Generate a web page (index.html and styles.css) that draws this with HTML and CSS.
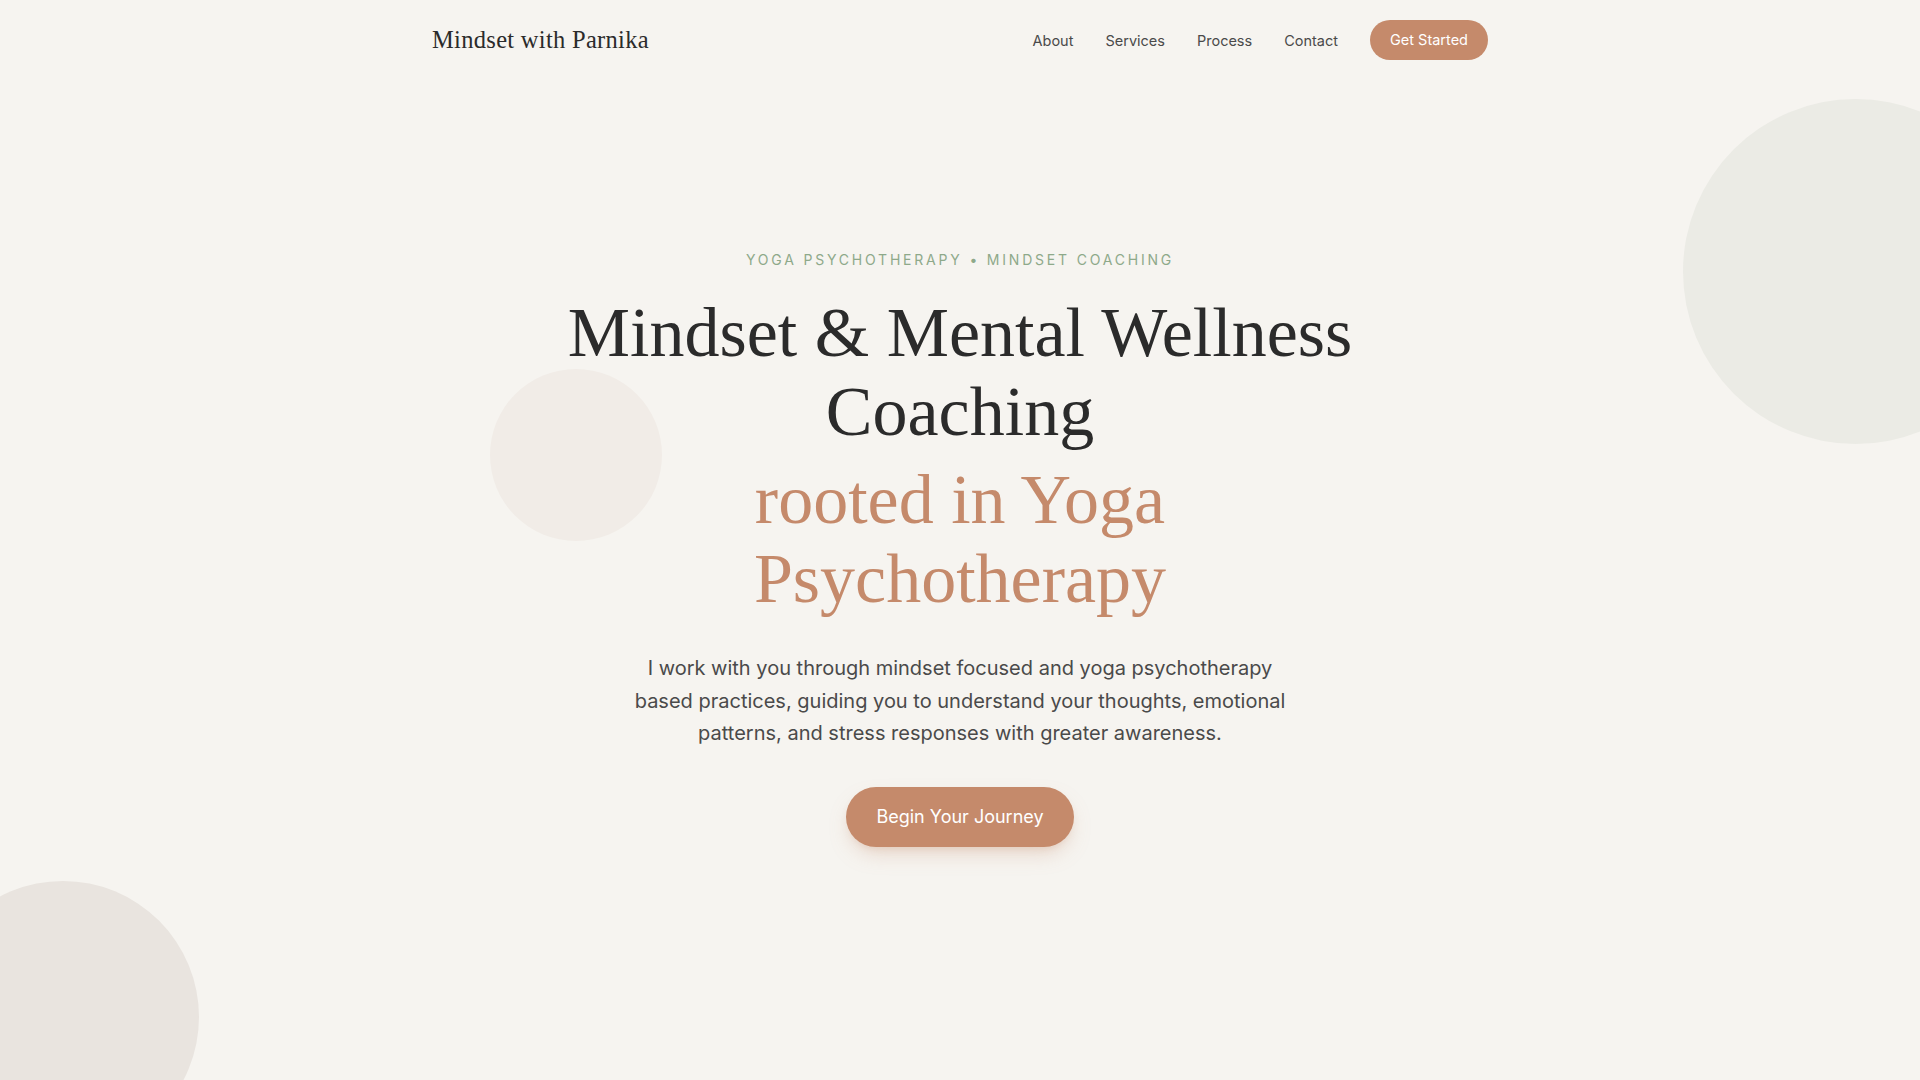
FILE: index.html
```html
<!DOCTYPE html>
<html lang="en">
<head>
<meta charset="utf-8">
<title>Mindset with Parnika</title>
<link rel="stylesheet" href="styles.css">
</head>
<body>
<div class="page">
  <div class="blob blob-sage"></div>
  <div class="blob blob-blush"></div>
  <div class="blob blob-sand"></div>

  <header class="site-header">
    <a class="logo" href="#">Mindset with Parnika</a>
    <nav class="nav">
      <a class="nav-link" href="#about">About</a>
      <a class="nav-link" href="#services">Services</a>
      <a class="nav-link" href="#process">Process</a>
      <a class="nav-link" href="#contact">Contact</a>
      <a class="btn btn-small" href="#start">Get Started</a>
    </nav>
  </header>

  <main class="hero">
    <p class="eyebrow">Yoga Psychotherapy <span class="dot">•</span> Mindset Coaching</p>
    <h1 class="hero-title">
      <span class="line">Mindset &amp; Mental Wellness</span>
      <span class="line">Coaching</span>
      <span class="accent">
        <span class="line">rooted in Yoga</span>
        <span class="line">Psychotherapy</span>
      </span>
    </h1>
    <p class="hero-text">I work with you through mindset focused and yoga psychotherapy based practices, guiding you to understand your thoughts, emotional patterns, and stress responses with greater awareness.</p>
    <a class="btn btn-large" href="#start">Begin Your Journey</a>
  </main>
</div>
</body>
</html>
```

FILE: styles.css
```css
* {
  box-sizing: border-box;
}

html, body {
  margin: 0;
  padding: 0;
}

body {
  background: #f6f4f0;
  color: #2e2e2e;
  font-family: Inter, "Open Sans", Arial, sans-serif;
}

a {
  text-decoration: none;
  color: inherit;
}

.page {
  position: relative;
  height: 100vh;
  overflow: hidden;
}

/* decorative circles */
.blob {
  position: absolute;
  border-radius: 50%;
  z-index: 0;
}

.blob-sage {
  width: 345px;
  height: 345px;
  left: 1683px;
  top: 99px;
  background: #ebebe5;
}

.blob-blush {
  width: 172px;
  height: 172px;
  left: 490px;
  top: 369px;
  background: #f1ece7;
}

.blob-sand {
  width: 272px;
  height: 272px;
  left: -73px;
  top: 881px;
  background: #e9e4df;
}

/* header */
.site-header {
  position: relative;
  z-index: 1;
  width: 1056px;
  margin: 0 auto;
  padding: 20px 0;
  display: flex;
  align-items: center;
  justify-content: space-between;
}

.logo {
  font-family: "Liberation Serif", "Times New Roman", serif;
  font-size: 24.5px;
  color: #2b2b2b;
  letter-spacing: 0.3px;
}

.nav {
  display: flex;
  align-items: center;
  gap: 32px;
}

.nav-link {
  font-size: 14.5px;
  color: #4a4a4a;
}

.btn {
  display: inline-block;
  background: #c58a6b;
  color: #fff;
  border-radius: 999px;
}

.btn-small {
  font-size: 14.5px;
  line-height: 20px;
  padding: 10px 20px;
}

.btn-large {
  font-size: 18px;
  line-height: 24px;
  padding: 18px 30px;
  box-shadow: 0 10px 22px -6px rgba(197, 138, 107, 0.35), 0 4px 8px -4px rgba(197, 138, 107, 0.25);
}

/* hero */
.hero {
  position: relative;
  z-index: 1;
  text-align: center;
  padding-top: 170px;
}

.eyebrow {
  margin: 0;
  font-size: 14px;
  line-height: 20px;
  letter-spacing: 0.2em;
  text-transform: uppercase;
  color: #8ea98a;
}

.hero-title {
  margin: 23px 0 0;
  font-family: "Liberation Serif", "Times New Roman", serif;
  font-weight: 400;
  font-size: 70px;
  line-height: 79px;
  color: #2b2b2b;
}

.hero-title .line {
  display: block;
}

.hero-title .accent {
  display: block;
  margin-top: 9px;
  color: #c58a6b;
}

.hero-text {
  max-width: 664px;
  margin: 34px auto 0;
  font-size: 20px;
  line-height: 32.5px;
  color: #4a4a4a;
  letter-spacing: 0;
}

.hero .btn-large {
  margin-top: 37px;
}
```
